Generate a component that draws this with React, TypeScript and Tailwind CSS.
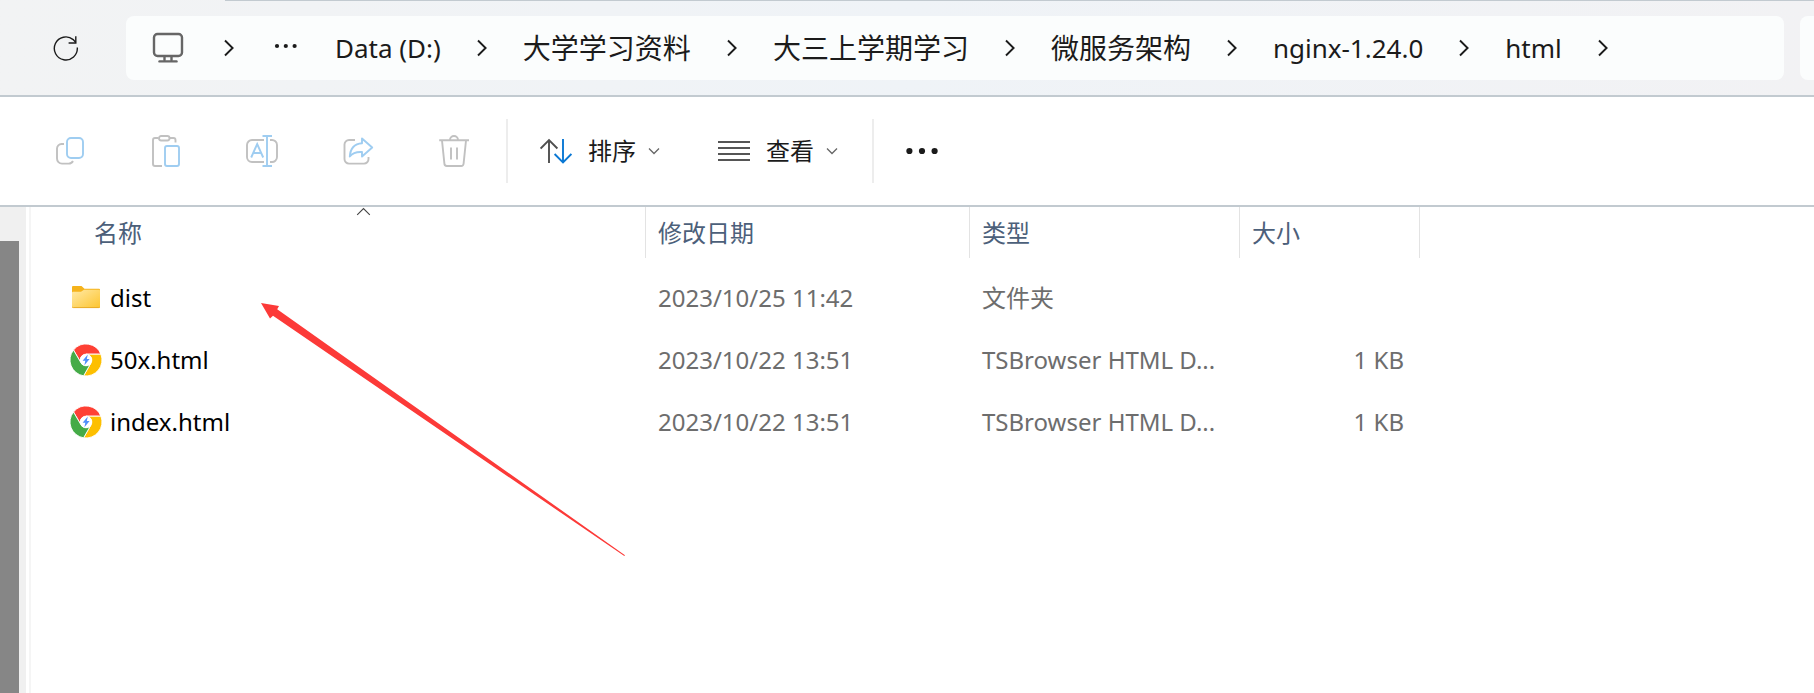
import { Fragment } from "react";

type FileEntry = {
  name: string;
  kind: "folder" | "html";
  modified: string;
  type: string;
  size: string;
};

const files: FileEntry[] = [
  { name: "dist", kind: "folder", modified: "2023/10/25 11:42", type: "文件夹", size: "" },
  { name: "50x.html", kind: "html", modified: "2023/10/22 13:51", type: "TSBrowser HTML D...", size: "1 KB" },
  { name: "index.html", kind: "html", modified: "2023/10/22 13:51", type: "TSBrowser HTML D...", size: "1 KB" },
];

const crumbs = [
  { label: "Data (D:)", className: "text-[26px]" },
  { label: "大学学习资料", className: "text-[28px]" },
  { label: "大三上学期学习", className: "text-[28px]" },
  { label: "微服务架构", className: "text-[28px]" },
  { label: "nginx-1.24.0", className: "text-[26px]" },
  { label: "html", className: "text-[26px]" },
];

function RefreshIcon() {
  return (
    <svg width="26" height="26" viewBox="0 0 26 26" fill="none" stroke="#1b1b1b" strokeWidth="1.4">
      <path d="M24.3 12.5A11.5 11.5 0 1 1 20.2 4.6L22.8 7.5" />
      <path d="M22.8 1.2V8H15.6" />
    </svg>
  );
}

function MonitorIcon() {
  return (
    <svg width="40" height="32" viewBox="0 0 40 32" fill="none" stroke="#666" strokeWidth="2.4" strokeLinecap="round">
      <rect x="6" y="2" width="28" height="22" rx="3.5" />
      <path d="M16.5 24.5V28M23.5 24.5V28" />
      <path d="M11.5 29.4H28.5" />
    </svg>
  );
}

function CrumbChevron() {
  return (
    <svg width="10" height="18" viewBox="0 0 10 18" fill="none" stroke="#1b1b1b" strokeWidth="1.9">
      <path d="M1 1.5L8.6 9L1 16.5" />
    </svg>
  );
}

function CrumbDots() {
  return (
    <svg width="29" height="18" viewBox="0 0 29 18" fill="#1b1b1b">
      <circle cx="7" cy="7" r="2.1" />
      <circle cx="15.8" cy="7" r="2.1" />
      <circle cx="24.6" cy="7" r="2.1" />
    </svg>
  );
}

function CopyIcon() {
  return (
    <svg width="32" height="32" viewBox="0 0 32 32" fill="none" strokeWidth="1.9">
      <path d="M10 9H7.5A4.5 4.5 0 0 0 3 13.500V23.500A5 5 0 0 0 8 28.600H14A5 5 0 0 0 19 26" stroke="#c1c1c1" />
      <rect x="13" y="3" width="16" height="20" rx="4" stroke="#9fcdf1" />
    </svg>
  );
}

function PasteIcon() {
  return (
    <svg width="32" height="32" viewBox="0 0 32 32" fill="none" strokeWidth="1.9">
      <path d="M8.500 3H5A2 2 0 0 0 3 5V29A2 2 0 0 0 5 31H12" stroke="#c1c1c1" />
      <path d="M19.500 3H23.500A2 2 0 0 1 25.500 5V7.500" stroke="#c1c1c1" />
      <rect x="9" y="1" width="10.500" height="4.500" rx="2.200" stroke="#c1c1c1" />
      <rect x="15" y="11" width="14" height="20" rx="2" stroke="#9fcdf1" />
    </svg>
  );
}

function RenameIcon() {
  return (
    <svg width="32" height="32" viewBox="0 0 32 32" fill="none" strokeWidth="1.9">
      <path d="M18 5H6A5 5 0 0 0 1 10V22A5 5 0 0 0 6 27H18" stroke="#c1c1c1" />
      <path d="M24 5H25.500A5 5 0 0 1 31 10V22A5 5 0 0 1 25.500 27H24" stroke="#c1c1c1" />
      <path d="M21 1V31M16.500 1H26M16.500 31H26M5.200 22.500L11.200 9L17.200 22.500M7.500 18H15" stroke="#9fcdf1" />
    </svg>
  );
}

function ShareIcon() {
  return (
    <svg width="32" height="32" viewBox="0 0 32 32" fill="none" strokeWidth="1.9" strokeLinejoin="round">
      <path d="M13 5H7A4.500 4.500 0 0 0 2.500 9.500V24A4.500 4.500 0 0 0 7 28.600H22A4.500 4.500 0 0 0 26.500 24V22" stroke="#c1c1c1" />
      <path d="M20 3.500L30.200 12.500L20 21.500V17C14.500 16.600 11 17.500 7.800 21.500C8.300 13.500 12.500 8.700 20 8.200Z" stroke="#9fcdf1" />
    </svg>
  );
}

function TrashIcon() {
  return (
    <svg width="32" height="32" viewBox="0 0 32 32" fill="none" stroke="#c1c1c1" strokeWidth="1.9">
      <path d="M1.200 5.200H31M12 5A4 4 0 0 1 20 5" />
      <path d="M4 5.500L6.400 28.600A2.400 2.400 0 0 0 8.800 31H23.200A2.400 2.400 0 0 0 25.600 28.600L28 5.500M13 12.500V24.500M19 12.500V24.500" />
    </svg>
  );
}

function SortIcon() {
  return (
    <svg width="32" height="26" viewBox="0 0 32 26" fill="none" strokeWidth="1.9">
      <path d="M9 25V2M0.600 10.500L9 2L17.400 10.500" stroke="#4f4f4f" />
      <path d="M23 1V24.500M14.600 16L23 24.500L31.400 16" stroke="#0a78d4" />
    </svg>
  );
}

function ViewIcon() {
  return (
    <svg width="32" height="22" viewBox="0 0 32 22" stroke="#555" strokeWidth="1.9">
      <path d="M0 2H32M0 8H32M0 14H32M0 20H32" />
    </svg>
  );
}

function DownIcon() {
  return (
    <svg width="12" height="8" viewBox="0 0 12 8" fill="none" stroke="#666" strokeWidth="1.3">
      <path d="M1 1.500L6 6.500L11 1.500" />
    </svg>
  );
}

function MoreIcon() {
  return (
    <svg width="32" height="8" viewBox="0 0 32 8" fill="#1b1b1b">
      <circle cx="3.400" cy="4" r="3.100" />
      <circle cx="16" cy="4" r="3.100" />
      <circle cx="28.600" cy="4" r="3.100" />
    </svg>
  );
}

function FolderIcon() {
  return (
    <svg width="32" height="32" viewBox="0 0 32 32">
      <defs>
        <linearGradient id="folder" x1="0" y1="0" x2="1" y2="1">
          <stop offset="0" stopColor="#ffe9a6" />
          <stop offset="1" stopColor="#fdc52f" />
        </linearGradient>
      </defs>
      <path d="M2 7V5A1 1 0 0 1 3 4H11.500L14.500 6.800H29A1 1 0 0 1 30 7.800V14H2Z" fill="#f5b31c" />
      <path d="M2 10.800A1 1 0 0 1 3 9.800H11L14 7.800H29A1 1 0 0 1 30 8.800V25A1 1 0 0 1 29 26H3A1 1 0 0 1 2 25Z" fill="url(#folder)" />
      <path d="M2.200 25Q2.600 25.600 3.500 25.600H28.500Q29.400 25.600 29.800 25" fill="none" stroke="#e5a625" strokeWidth="0.900" />
    </svg>
  );
}

function BrowserIcon() {
  return (
    <svg width="32" height="32" viewBox="0 0 32 32">
      <circle cx="16" cy="16" r="15.900" fill="#fff" />
      <g stroke="#fff" strokeWidth="0.900">
        <path d="M3.500 6A16 16 0 0 1 30.900 10.200H16A5.800 5.800 0 0 0 11 18.900Z" fill="#fe4034" />
        <path d="M30.900 10.200A16 16 0 0 1 13.600 31.800L21 18.900A5.800 5.800 0 0 0 16 10.200Z" fill="#fdbf00" />
        <path d="M13.600 31.800A16 16 0 0 1 3.500 6L11 18.900A5.800 5.800 0 0 0 21 18.900Z" fill="#45ab47" />
      </g>
      <circle cx="16" cy="16" r="6" fill="#fff" />
      <path d="M17.800 10.500L12.600 16.800H15.300L14.400 21.200L19.600 15H16.800Z" fill="#4f8ffb" />
    </svg>
  );
}

const fileActions = [
  { label: "复制", icon: <CopyIcon /> },
  { label: "粘贴", icon: <PasteIcon /> },
  { label: "重命名", icon: <RenameIcon /> },
  { label: "共享", icon: <ShareIcon /> },
  { label: "删除", icon: <TrashIcon /> },
];

const headers = ["名称", "修改日期", "类型", "大小"];

function AddressBar() {
  return (
    <header className="border-b-2 border-[#c2cad0] bg-linear-to-r from-[#f2f3f4] via-[#eff3f7] to-[#f2f2f4]">
      <div className="ml-[225px] h-px bg-[#c2cad0]" />
      <div className="flex items-center py-[15px]">
        <button aria-label="刷新" className="ml-[53px] flex w-[26px] shrink-0">
          <RefreshIcon />
        </button>
        <nav aria-label="路径" className="ml-[47px] flex h-16 min-w-0 flex-1 items-center gap-9 overflow-hidden rounded-lg bg-[#fbfdfd] pl-[22px] whitespace-nowrap text-[#1b1b1b]">
          <button aria-label="此电脑" className="shrink-0">
            <MonitorIcon />
          </button>
          <CrumbChevron />
          <button aria-label="更多路径" className="shrink-0">
            <CrumbDots />
          </button>
          {crumbs.map((crumb) => (
            <Fragment key={crumb.label}>
              <a href="#" className={`shrink-0 leading-9 ${crumb.className}`}>
                {crumb.label}
              </a>
              <CrumbChevron />
            </Fragment>
          ))}
        </nav>
        <div className="ml-4 h-16 w-[14px] shrink-0 rounded-l-lg bg-[#fbfdfd]" />
      </div>
    </header>
  );
}

function Toolbar() {
  return (
    <div role="toolbar" className="flex h-[110px] items-center border-b-2 border-[#c2cad0] text-2xl text-[#1b1b1b]">
      <div className="flex gap-16 pl-[54px]">
        {fileActions.map((action) => (
          <button key={action.label} aria-label={action.label} disabled>
            {action.icon}
          </button>
        ))}
      </div>
      <div className="ml-9 h-16 w-0.5 bg-[#ededed]" />
      <button className="ml-8 flex items-center">
        <SortIcon />
        <span className="ml-4">排序</span>
        <span className="ml-3">
          <DownIcon />
        </span>
      </button>
      <button className="ml-[58px] flex items-center">
        <ViewIcon />
        <span className="ml-4">查看</span>
        <span className="ml-3">
          <DownIcon />
        </span>
      </button>
      <div className="ml-[34px] h-16 w-0.5 bg-[#ededed]" />
      <button aria-label="更多" className="ml-8">
        <MoreIcon />
      </button>
    </div>
  );
}

function FileTable() {
  return (
    <table className="w-[1389px] table-fixed border-collapse self-start text-left text-2xl">
      <colgroup>
        <col className="w-[615px]" />
        <col className="w-[324px]" />
        <col className="w-[270px]" />
        <col className="w-[180px]" />
      </colgroup>
      <thead>
        <tr>
          {headers.map((header, index) => (
            <th key={header} className="p-0 pb-[9px] font-normal text-[#4c607a]">
              <div className={`relative flex h-[51px] items-center border-r border-[#e3e3e3] ${index === 0 ? "pl-[63px]" : "pl-3"}`}>
                {header}
                {index === 0 && (
                  <svg className="absolute top-0 left-[325px]" width="15" height="9" viewBox="0 0 15 9" fill="none" stroke="#444" strokeWidth="1.100">
                    <path d="M1.200 7.800L7.500 1.500L13.800 7.800" />
                  </svg>
                )}
              </div>
            </th>
          ))}
        </tr>
      </thead>
      <tbody className="text-[#6d6d6d]">
        {files.map((file) => (
          <tr key={file.name} className="h-[62px]">
            <td className="p-0 pl-[39px] text-black">
              <span className="flex items-center gap-2">
                {file.kind === "folder" ? <FolderIcon /> : <BrowserIcon />}
                {file.name}
              </span>
            </td>
            <td className="p-0 pl-3">{file.modified}</td>
            <td className="p-0 pl-3 whitespace-nowrap">{file.type}</td>
            <td className="p-0 pr-4 text-right">{file.size}</td>
          </tr>
        ))}
      </tbody>
    </table>
  );
}

export default function App() {
  return (
    <div className="relative flex min-h-screen flex-col overflow-hidden bg-white font-['Noto_Sans','Noto_Sans_CJK_SC',sans-serif]">
      <AddressBar />
      <Toolbar />
      <main className="flex flex-1">
        <div className="flex w-[26px] shrink-0 bg-[#f0f0f0] pt-[34px]">
          <div className="w-[19px] bg-[#868686]" />
        </div>
        <div className="ml-[3px] w-0.5 shrink-0 bg-[#f5f5f5]" />
        <FileTable />
      </main>
      <svg className="pointer-events-none absolute top-[300px] left-[258px]" width="370" height="260" viewBox="258 300 370 260">
        <path d="M261 303L279 306L277.200 309.300L625 555.200L624.300 556.100L273 315.800L270 318.500Z" fill="#fc3a38" />
      </svg>
    </div>
  );
}
